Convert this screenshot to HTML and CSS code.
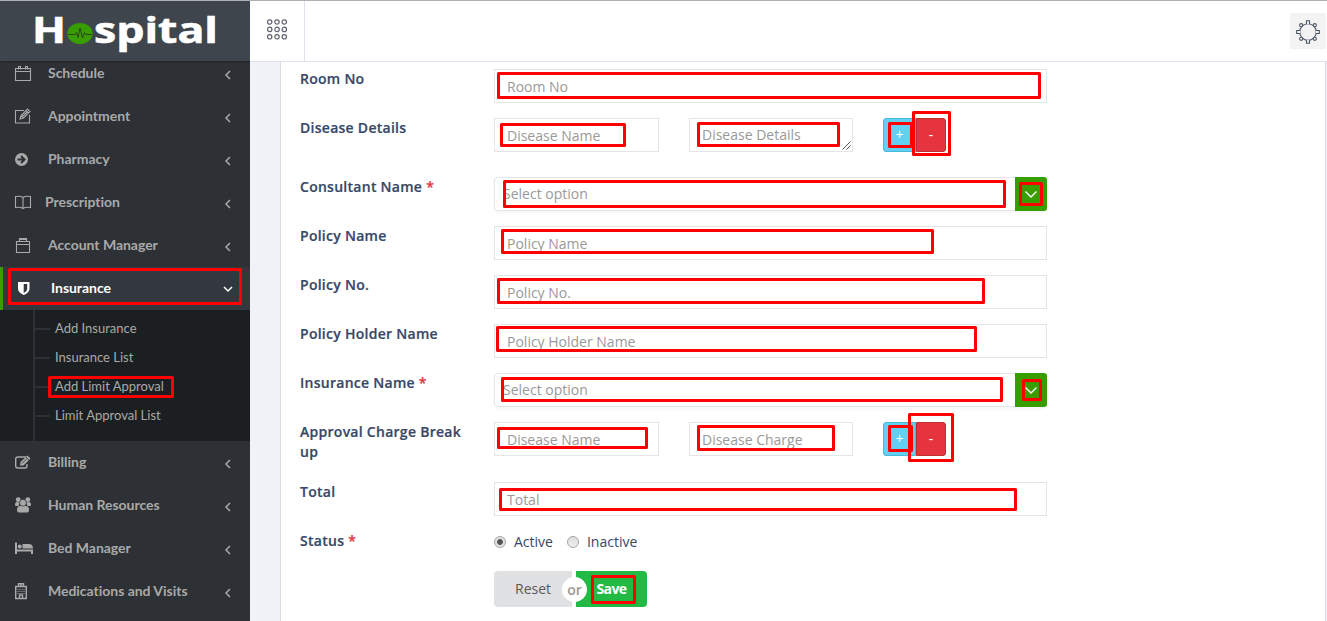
FILE: index.html
```html
<!DOCTYPE html>
<html lang="en">
<head>
<meta charset="utf-8">
<title>Add Limit Approval</title>
<link rel="stylesheet" href="styles.css">
</head>
<body>
<div class="app">
  <aside class="sidebar">
    <div class="brand">
      <svg width="190" height="46" viewBox="0 0 190 46">
        <g class="brand-text">
          <text x="-2" y="30" textLength="34" lengthAdjust="spacingAndGlyphs">H</text>
          <text x="60" y="30" textLength="124" lengthAdjust="spacingAndGlyphs">spital</text>
        </g>
        <ellipse cx="46" cy="20.500" rx="12.600" ry="10.500" fill="#389e00"/>
        <path d="M34 21.500H41L42.500 19.500L44 24.500L46 15L48.500 25L50.500 19.500L52 21.500H58" fill="none" stroke="#2b4423" stroke-width="1"/>
      </svg>
    </div>
    <nav class="menu">
      <a class="item"><svg class="icon" viewBox="0 0 16 16"><path class="line" d="M.5 3.500h15v12H.5zM.5 6.500h15M3.500 4.500V1.500h2v3M10.500 4.500V1.500h2v3"/></svg><span>Schedule</span><svg class="chev" viewBox="0 0 8 10"><path d="M6 1 2 5l4 4"/></svg></a>
      <a class="item"><svg class="icon" viewBox="0 0 16 16"><path class="line" d="M9 2.500H.5v12.500h14V7M5 11l1-3.500L12.500 1l2.500 2.500L8.500 10zM11 2.500 13.500 5M6 7.500 8.500 10M7.500 8.500l5-5"/></svg><span>Appointment</span><svg class="chev" viewBox="0 0 8 10"><path d="M6 1 2 5l4 4"/></svg></a>
      <a class="item"><svg class="icon" viewBox="0 0 16 16"><circle cx="6.500" cy="8.500" r="6.500" fill="#a9a9a9"/><path d="M2.500 8.500h7M6 5 9.500 8.500 6 12" fill="none" stroke="#2d3135" stroke-width="2"/></svg><span>Pharmacy</span><svg class="chev" viewBox="0 0 8 10"><path d="M6 1 2 5l4 4"/></svg></a>
      <a class="item near"><svg class="icon" viewBox="0 0 16 16"><path class="line" d="M8 3.500C6 2 3 2 .5 2.500v11C3 13 6 13 8 14.500c2-1.500 5-1.500 7.500-1v-11C13 2 10 2 8 3.500zM8 3.500v11"/></svg><span>Prescription</span><svg class="chev" viewBox="0 0 8 10"><path d="M6 1 2 5l4 4"/></svg></a>
      <a class="item"><svg class="icon" viewBox="0 0 16 16"><path class="line" d="M1.500 4.500h13v11h-13zM1.500 7.500h13M4.500 4.500v-3h7v3M4.500 2.500h7"/></svg><span>Account Manager</span><svg class="chev" viewBox="0 0 8 10"><path d="M6 1 2 5l4 4"/></svg></a>
      <a class="item active"><svg class="icon" viewBox="0 0 16 16"><path d="M0 2h11.500v6.500c0 3-2 5-5.700 6.500C2 13.500 0 11.500 0 8.500z" fill="#fff"/><path d="M5.700 4h3.500v4.500c0 2-1 3-3.500 4.500z" fill="#33383f"/></svg><span>Insurance</span><svg class="chev down" viewBox="0 0 10 8"><path d="m1 2 4 4 4-4"/></svg></a>
      <div class="submenu">
        <a>Add Insurance</a>
        <a>Insurance List</a>
        <a>Add Limit Approval</a>
        <a>Limit Approval List</a>
      </div>
      <a class="item"><svg class="icon" viewBox="0 0 16 16"><path d="M11 3H3Q.7 3 .7 5v7q0 2 2.300 2h7q2 0 2-2.500V10" fill="none" stroke="#a9a9a9" stroke-width="1.400"/><path d="m5 11.500.5-3.500L12.500 1.500 15.500 4.500 8.500 11.500z" fill="#a9a9a9"/><path d="m7 9.500 5-5M11 3 14 6" stroke="#2d3135" stroke-width=".8"/></svg><span>Billing</span><svg class="chev" viewBox="0 0 8 10"><path d="M6 1 2 5l4 4"/></svg></a>
      <a class="item"><svg class="icon" viewBox="0 0 16 16"><g fill="#a9a9a9"><circle cx="3.200" cy="2.700" r="2.400"/><circle cx="12.800" cy="2.700" r="2.400"/><path d="M0 8q0-3 2-3l3 .5L3.500 9H1Q0 9 0 8zM16 8q0-3-2-3l-3 .5L12.500 9H15q1 0 1-1z"/><path d="M2 13q0-4 3-4h6q3 0 3 4 0 2.500-2 2.500H4Q2 15.500 2 13z"/><circle cx="8" cy="5.800" r="3.400" stroke="#2d3135" stroke-width=".6"/></g></svg><span>Human Resources</span><svg class="chev" viewBox="0 0 8 10"><path d="M6 1 2 5l4 4"/></svg></a>
      <a class="item wide"><svg class="icon" viewBox="0 0 18 16"><g fill="#a9a9a9"><path d="M0 2.500h2v7h16V14h-2v-2.500H2V14H0z"/><circle cx="4.700" cy="6.500" r="2"/><path d="M7.500 4h7Q18 4.500 18 8.500H7.500z"/></g></svg><span>Bed Manager</span><svg class="chev" viewBox="0 0 8 10"><path d="M6 1 2 5l4 4"/></svg></a>
      <a class="item"><svg class="icon" viewBox="0 0 16 16"><path d="M.7 3.500h10.600v12H.7zM3.500 4V.7h5V4M4.500 15v-3h3v3M6 1v3" fill="none" stroke="#a9a9a9" stroke-width="1.400"/><path d="M2.500 6.500h7M2.500 8.500h7M2.500 10.500h7" stroke="#a9a9a9" stroke-dasharray="1 1"/></svg><span>Medications and Visits</span><svg class="chev" viewBox="0 0 8 10"><path d="M6 1 2 5l4 4"/></svg></a>
    </nav>
  </aside>
  <div class="main">
    <header class="topbar">
      <div class="toggle"><svg width="21" height="21" viewBox="0 0 21 21" fill="none" stroke="#5f6270" stroke-width="1.200"><circle cx="2.700" cy="3" r="2.200"/><circle cx="10" cy="3" r="2.200"/><circle cx="17.300" cy="3" r="2.200"/><circle cx="2.700" cy="10.400" r="2.200"/><circle cx="10" cy="10.400" r="2.200"/><circle cx="17.300" cy="10.400" r="2.200"/><circle cx="2.700" cy="17.800" r="2.200"/><circle cx="10" cy="17.800" r="2.200"/><circle cx="17.300" cy="17.800" r="2.200"/></svg></div>
      <div class="gear"><svg width="24" height="24" viewBox="0 0 24 24" fill="#f3f3f3" stroke="#4d5566" stroke-width="1.100"><circle cx="12" cy="12" r="8.300"/><path d="M10.500 4V.7h3V4M10.500 20v3.300h3V20M4 10.500H.7v3H4M20 10.500h3.300v3H20"/><circle cx="5.200" cy="5.200" r="1.600"/><circle cx="18.800" cy="5.200" r="1.600"/><circle cx="5.200" cy="18.800" r="1.600"/><circle cx="18.800" cy="18.800" r="1.600"/></svg></div>
    </header>
    <section class="panel">
      <div class="row"><label>Room No</label><div class="input">Room No</div></div>
      <div class="row disease"><label>Disease Details</label>
        <div class="split"><div class="input">Disease Name</div><div class="input area">Disease Details<svg class="grip" width="9" height="9" viewBox="0 0 9 9"><path d="m.5 8.500 8-8m-4 8 4-4" stroke="#555" fill="none"/></svg></div>
        <div class="pair"><button class="plus">+</button><button class="minus">-</button></div></div>
      </div>
      <div class="row"><label>Consultant Name <i>*</i></label><div class="select"><span>Select option</span><b><svg width="14" height="9" viewBox="0 0 14 9"><path d="m1.500 1.500 5.500 5.500 5.500-5.500"/></svg></b></div></div>
      <div class="row"><label>Policy Name</label><div class="input">Policy Name</div></div>
      <div class="row"><label>Policy No.</label><div class="input">Policy No.</div></div>
      <div class="row"><label>Policy Holder Name</label><div class="input">Policy Holder Name</div></div>
      <div class="row"><label>Insurance Name <i>*</i></label><div class="select"><span>Select option</span><b><svg width="14" height="9" viewBox="0 0 14 9"><path d="m1.500 1.500 5.500 5.500 5.500-5.500"/></svg></b></div></div>
      <div class="row charge"><label>Approval Charge Break up</label>
        <div class="split"><div class="input">Disease Name</div><div class="input amount">Disease Charge</div>
        <div class="pair"><button class="plus">+</button><button class="minus">-</button></div></div>
      </div>
      <div class="row"><label>Total</label><div class="input">Total</div></div>
      <div class="row status"><label>Status <i>*</i></label><div class="radios"><span class="radio on"></span><span class="choice">Active</span><span class="radio"></span><span class="choice">Inactive</span></div></div>
      <div class="row"><span></span><div class="actions"><button class="reset">Reset</button><span class="or">or</span><button class="save">Save</button></div></div>
    </section>
  </div>
</div>
<svg class="marks" width="1327" height="621" viewBox="0 0 1327 621">
  <rect x="9.500" y="269.500" width="231" height="34"/>
  <rect x="49.500" y="377.500" width="123" height="19"/>
  <rect x="498.500" y="73.500" width="541" height="24"/>
  <rect x="501.500" y="124.500" width="123" height="21"/>
  <rect x="698.500" y="123.500" width="140" height="22"/>
  <rect x="889.500" y="123.500" width="22" height="23"/>
  <rect x="913.500" y="112.500" width="36" height="42"/>
  <rect x="504.500" y="181.500" width="500" height="25"/>
  <rect x="1020.500" y="183.500" width="21" height="21"/>
  <rect x="502.500" y="230.500" width="430" height="22"/>
  <rect x="498.500" y="279.500" width="485" height="23"/>
  <rect x="497.500" y="327.500" width="478" height="23"/>
  <rect x="502.500" y="378.500" width="499" height="22"/>
  <rect x="1023.500" y="380.500" width="17" height="19"/>
  <rect x="498.500" y="428.500" width="148" height="19"/>
  <rect x="698.500" y="426.500" width="135" height="23"/>
  <rect x="889.500" y="426.500" width="22" height="24"/>
  <rect x="909.500" y="414.500" width="43" height="46"/>
  <rect x="500.500" y="489.500" width="515" height="20"/>
  <rect x="592.500" y="576.500" width="42" height="26"/>
</svg>
</body>
</html>
```
FILE: styles.css
```css
* { box-sizing: border-box; }
body { margin: 0; overflow: hidden; font: 14px/20px "Open Sans", sans-serif; color: #374767; background: #f1f2f7; }
.app { display: flex; height: 621px; border-top: 1px solid #b0afb1; }
.sidebar { width: 250px; background: #2d3135; overflow: hidden; }
.brand { position: relative; z-index: 1; height: 60px; background: #3f454d; padding: 12px 0 0 34px; box-shadow: 0 1px 2px rgba(0,0,0,.3); }
.brand svg { display: block; overflow: visible; }
.brand-text { font: 700 35px "Open Sans", sans-serif; fill: #fff; stroke: #fff; stroke-width: .6; }
.menu { margin-top: -9px; font-family: Lato, sans-serif; }
.item { display: flex; align-items: center; height: 43px; padding: 0 18.5px 0 15px; color: #a9a9a9; font-size: 14px; font-weight: 700; letter-spacing: -.03px; }
.item .icon { width: 16px; height: 16px; flex: none; margin-top: -2px; overflow: visible; }
.item span { margin: -2px 0 0 17px; flex: 1; white-space: nowrap; }
.item.near span { margin-left: 14px; }
.item.wide .icon { width: 18px; }
.item.wide span { margin-left: 15px; }
.line { fill: none; stroke: #a9a9a9; stroke-width: 1.1; }
.chev { width: 8px; height: 10px; margin-top: 3px; fill: none; stroke: #a9a9a9; stroke-width: 1.5; }
.chev.down { width: 10px; height: 8px; margin-top: 1px; margin-right: -1px; stroke: #fff; }
.active { background: #33383f; border-left: 3px solid #389e00; color: #fff; }
.submenu { position: relative; height: 131px; padding-top: 4px; background: #1c1f22; }
.submenu::before { content: ""; position: absolute; left: 33px; top: 0; bottom: 0; width: 2px; background: #2d3135; }
.submenu a { display: flex; align-items: center; height: 29px; padding: 0 0 2px 35px; color: #a9a9a9; font-size: 13px; }
.submenu a::before { content: ""; width: 15px; height: 2px; margin: 2px 5px 0 0; background: #2d3135; }
.main { flex: 1; }
.topbar { height: 61px; display: flex; justify-content: space-between; background: #fff; border-bottom: 1px solid #e1e1ee; }
.toggle { width: 55px; border-right: 1px solid #e1e1ee; padding: 18px 0 0 17px; }
.gear { width: 36px; height: 36px; margin: 12px 1px 0 0; background: #f3f3f3; display: grid; place-items: center; padding-top: 2px; }
.panel { height: 559px; margin: 0 1px 0 30px; padding: 7px 0 0 19px; background: #fff; border: solid #dcdde0; border-width: 0 1px; }
.row { display: grid; grid-template-columns: 194px 553px; height: 49px; align-items: start; }
.row.disease { height: 59px; }
.row.charge { height: 60px; }
.row.status { height: 40px; }
label { font-weight: 600; width: 170px; letter-spacing: .27px; -webkit-text-stroke: .2px; }
label i { font-style: normal; color: #e5343d; }
.input { height: 34px; padding: 1px 12px 0; border: 1px solid #e4e5e7; line-height: 32px; color: #999; background: #fff; white-space: nowrap; }
.split { display: grid; grid-template-columns: 165px 164px 63px; column-gap: 30px; }
.area { position: relative; padding: 0 12px; line-height: 31px; }
.grip { position: absolute; right: 1px; bottom: 1px; }
.pair { display: flex; }
button { font: inherit; padding: 0; height: 34px; color: #fff; border: 1px solid; }
.plus { width: 33px; background: #62d0f1; border-color: #46b8da; border-radius: 3px 0 0 3px; }
.minus { width: 30px; background: #e5343d; border-color: #bf2d35; border-radius: 0 3px 3px 0; }
.select { display: flex; height: 34px; border: 1px solid #e4e5e7; border-radius: 4px; box-shadow: 0 2px 3px rgba(0,0,0,.04); color: #999; line-height: 32px; }
.select span { flex: 1; padding-left: 8px; }
.select b { width: 32px; height: 34px; margin: -1px; background: #389e00; border-radius: 0 3px 3px 0; display: grid; place-items: center; }
.select path { fill: none; stroke: #fff; stroke-width: 1.4; }
.radios { display: flex; align-items: center; height: 22px; }
.radio { width: 12px; height: 12px; border: 1px solid #a5a5a5; border-radius: 50%; background: linear-gradient(#ddd, #eee); }
.radio.on { background: radial-gradient(circle, #555 0 2.5px, #e4e4e4 3.3px); }
.choice { margin: 0 14px 0 8px; }
.actions { position: relative; display: flex; gap: 4px; width: 153px; }
.actions button { height: 36px; border: 0; }
.actions .reset { width: 78px; background: #e0e1e2; color: #5a5a5a; border-radius: 4px 0 0 4px; }
.actions .save { width: 71px; background: #21ba45; font-weight: 700; letter-spacing: -.6px; border-radius: 0 4px 4px 0; }
.or { position: absolute; left: 68px; top: 6px; width: 25px; height: 25px; border-radius: 50%; background: #fff; color: #999; font-weight: 600; line-height: 25px; text-align: center; }
.marks { position: absolute; inset: 0; fill: none; stroke: #f00; stroke-width: 3; stroke-linejoin: round; pointer-events: none; }
```
